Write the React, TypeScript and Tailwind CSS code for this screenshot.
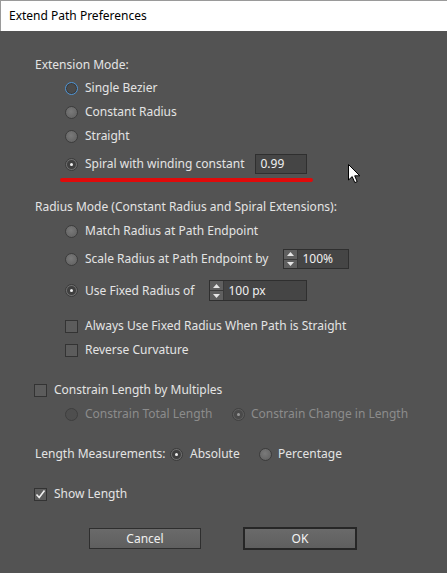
import React from 'react';

const font = { fontFamily: '"Noto Sans", "Open Sans", sans-serif' };

function Radio({ checked = false, focus = false, disabled = false }: { checked?: boolean; focus?: boolean; disabled?: boolean }) {
  if (focus) {
    return (
      <span className="w-[13px] h-[13px] rounded-full border border-[#4f95d6] bg-[#4a4a4a] shadow-[inset_0_0_0_1px_#3a3a3a] shrink-0" />
    );
  }
  if (checked) {
    return (
      <span className={`w-[13px] h-[13px] rounded-full border flex items-center justify-center shrink-0 ${disabled ? 'border-[#404040] bg-[#5e5e5e]' : 'border-[#3a3a3a] bg-[#6e6e6e]'}`}>
        <span className={`w-[9px] h-[9px] rounded-full flex items-center justify-center ${disabled ? 'bg-[#4a4a4a]' : 'bg-[#3f3f3f]'}`}>
          <span className={`w-[3px] h-[3px] rounded-full ${disabled ? 'bg-[#9a9a9a]' : 'bg-[#f2f2f2]'}`} />
        </span>
      </span>
    );
  }
  return (
    <span className={`w-[13px] h-[13px] rounded-full border shrink-0 ${disabled ? 'border-[#3e3e3e] bg-[#4e4e4e]' : 'border-[#3c3c3c] bg-[radial-gradient(circle_at_45%_40%,#7a7a7a,#5e5e5e)]'}`} />
  );
}

function Check({ checked = false }: { checked?: boolean }) {
  return (
    <span className="w-[13px] h-[13px] border border-[#333333] bg-[#5c5c5c] shrink-0 flex items-center justify-center">
      {checked && (
        <svg width="11" height="11" viewBox="0 0 11 11">
          <path d="M1.5 5.5 L4.2 8.5 L9.5 1.5" fill="none" stroke="#f0f0f0" strokeWidth="1.6" />
        </svg>
      )}
    </span>
  );
}

function Spinner({ value, width }: { value: string; width: string }) {
  return (
    <div className={`flex h-full border border-[#2f2f2f] bg-[#454545] ${width}`}>
      <div className="w-[14px] flex flex-col bg-[#5f5f5f] border-r border-[#3a3a3a]">
        <div className="flex-1 flex items-center justify-center border-b border-[#3a3a3a]">
          <svg width="7" height="4" viewBox="0 0 7 4"><path d="M0 4 L3.5 0 L7 4 Z" fill="#e6e6e6" /></svg>
        </div>
        <div className="flex-1 flex items-center justify-center">
          <svg width="7" height="4" viewBox="0 0 7 4"><path d="M0 0 L3.5 4 L7 0 Z" fill="#e6e6e6" /></svg>
        </div>
      </div>
      <span className="pl-[4px] flex items-center text-[#f0f0f0]">{value}</span>
    </div>
  );
}

export default function App() {
  return (
    <div className="w-[447px] h-[573px] bg-[#535353] text-[12px] text-[#e4e4e4] relative overflow-hidden" style={font}>
      {/* title bar */}
      <div className="h-[31px] bg-white border-t border-l border-[#9a9a9a] flex items-center pl-[8px] text-black text-[12px]">
        Extend Path Preferences
      </div>

      <div className="flex flex-col">
        <div className="h-[20px] mt-[24px] pl-[35px] flex items-center">Extension Mode:</div>

        <div className="h-[20px] mt-[3px] pl-[65px] flex items-center gap-[7px]"><Radio focus />Single Bezier</div>
        <div className="h-[20px] mt-[4px] pl-[65px] flex items-center gap-[7px]"><Radio />Constant Radius</div>
        <div className="h-[20px] mt-[4px] pl-[65px] flex items-center gap-[7px]"><Radio />Straight</div>
        <div className="h-[20px] mt-[8px] pl-[65px] flex items-center gap-[7px]">
          <Radio checked />
          <span>Spiral with winding constant</span>
          <div className="ml-[4px] w-[52px] h-[20px] border border-[#2f2f2f] bg-[#454545] flex items-center pl-[4px] text-[#f0f0f0]">0.99</div>
        </div>
        <div className="ml-[60px] mt-[4px] w-[253px] h-[4px] rounded-full bg-[#e00a0a]" />

        <div className="h-[20px] mt-[15px] pl-[35px] flex items-center">Radius Mode (Constant Radius and Spiral Extensions):</div>
        <div className="h-[20px] mt-[4px] pl-[65px] flex items-center gap-[7px]"><Radio />Match Radius at Path Endpoint</div>
        <div className="h-[20px] mt-[8px] pl-[65px] flex items-center gap-[7px]">
          <Radio />
          <span>Scale Radius at Path Endpoint by</span>
          <div className="ml-[8px] h-[20px]"><Spinner value="100%" width="w-[66px]" /></div>
        </div>
        <div className="h-[21px] mt-[11px] pl-[65px] flex items-center gap-[7px]">
          <Radio checked />
          <span>Use Fixed Radius of</span>
          <div className="ml-[8px] h-[21px]"><Spinner value="100 px" width="w-[98px]" /></div>
        </div>

        <div className="h-[20px] mt-[15px] pl-[65px] flex items-center gap-[7px]"><Check />Always Use Fixed Radius When Path is Straight</div>
        <div className="h-[20px] mt-[4px] pl-[65px] flex items-center gap-[7px]"><Check />Reverse Curvature</div>

        <div className="h-[20px] mt-[20px] pl-[34px] flex items-center gap-[7px]"><Check />Constrain Length by Multiples</div>
        <div className="h-[20px] mt-[4px] pl-[65px] flex items-center text-[#8c8c8c]">
          <div className="flex items-center gap-[7px] w-[167px]"><Radio disabled />Constrain Total Length</div>
          <div className="flex items-center gap-[6px]"><Radio checked disabled />Constrain Change in Length</div>
        </div>

        <div className="h-[20px] mt-[20px] pl-[35px] flex items-center">
          <span className="w-[135px]">Length Measurements:</span>
          <div className="flex items-center gap-[7px] w-[89px]"><Radio checked />Absolute</div>
          <div className="flex items-center gap-[6px]"><Radio />Percentage</div>
        </div>

        <div className="h-[20px] mt-[20px] pl-[34px] flex items-center gap-[7px]"><Check checked />Show Length</div>

        <div className="mt-[23px] flex items-center pl-[89px] gap-[42px]">
          <button className="w-[112px] h-[21px] border border-[#2e2e2e] bg-[linear-gradient(#6a6a6a,#5f5f5f)] text-[#f0f0f0] text-[12px] flex items-center justify-center">Cancel</button>
          <button className="w-[114px] h-[23px] border-2 border-[#262626] bg-[linear-gradient(#6a6a6a,#5f5f5f)] text-[#f4f4f4] text-[12px] flex items-center justify-center">OK</button>
        </div>
      </div>

      {/* mouse cursor */}
      <svg className="absolute left-[348px] top-[164px]" width="13" height="20" viewBox="0 0 13 20">
        <path d="M0.5 0.5 L0.5 16 L4.2 12.6 L6.8 18.6 L9.2 17.6 L6.7 11.8 L11.8 11.8 Z" fill="#ffffff" stroke="#000000" strokeWidth="1" strokeLinejoin="round" />
      </svg>
    </div>
  );
}
